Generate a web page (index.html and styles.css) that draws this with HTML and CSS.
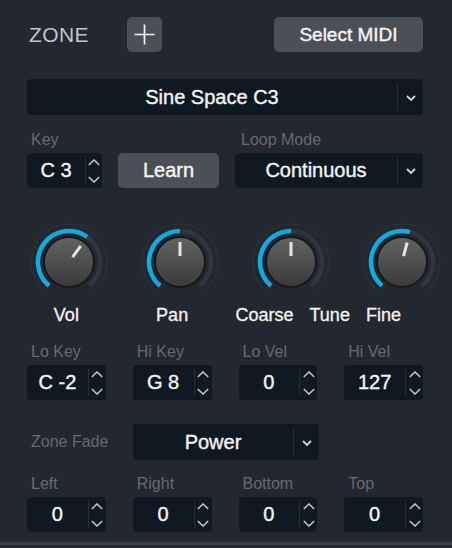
FILE: index.html
```html
<!DOCTYPE html>
<html lang="en">
<head>
    <meta charset="UTF-8">
    <title>Zone</title>
    <link rel="stylesheet" href="styles.css">
</head>
<body>
    <div class="panel">
        <div class="header">
            <span class="zone-title">ZONE</span>
            <button class="btn plus-btn">
                <svg width="21" height="21" viewBox="0 0 21 21"><path d="M10.5 0.5V20.5M0.5 10.5H20.5" stroke="#f2f2f2" stroke-width="1.7"/></svg>
            </button>
            <button class="btn midi-btn">Select MIDI</button>
        </div>

        <div class="dropdown sample">
            <span class="value">Sine Space C3</span>
            <span class="divider"></span>
            <span class="chevron"><svg width="10" height="6" viewBox="0 0 10 6"><polyline points="1,1 5,5 9,1" fill="none" stroke="#d4d4d4" stroke-width="1.8"/></svg></span>
        </div>

        <div class="row-key">
            <div class="group key-group">
                <div class="label">Key</div>
                <div class="stepper">
                    <span class="value">C 3</span>
                    <span class="divider"></span>
                    <span class="arrows"><svg width="12" height="24" viewBox="0 0 12 24"><polyline points="0.8,6 6,1 11.2,6" fill="none" stroke="#c4c4c4" stroke-width="1.6"/><polyline points="0.8,18 6,23 11.2,18" fill="none" stroke="#c4c4c4" stroke-width="1.6"/></svg></span>
                </div>
            </div>
            <button class="btn learn-btn">Learn</button>
            <div class="group loop-group">
                <div class="label">Loop Mode</div>
                <div class="dropdown">
                    <span class="value">Continuous</span>
                    <span class="divider"></span>
                    <span class="chevron"><svg width="10" height="6" viewBox="0 0 10 6"><polyline points="1,1 5,5 9,1" fill="none" stroke="#d4d4d4" stroke-width="1.8"/></svg></span>
                </div>
            </div>
        </div>

        <!-- knobs -->
        <div class="grid4 knobs">
            <div class="knob">
                <svg width="84" height="84" viewBox="0 0 84 84">
                    <path d="M17.57 71.11A38 38 0 1 1 66.43 71.11" fill="none" stroke="#2b3038" stroke-width="1.5"/>
                    <path d="M22.07 65.75A31 31 0 1 1 61.93 65.75" fill="none" stroke="#30363f" stroke-width="4.5"/>
                    <path d="M22.07 65.75A31 31 0 0 1 60.22 16.92" fill="none" stroke="#14a9df" stroke-width="4.5"/>
                    <circle cx="42" cy="42" r="26" fill="#15181d"/>
                    <circle cx="42" cy="42" r="24" fill="url(#knobFill)"/>
                    <line x1="45.53" y1="37.15" x2="53.76" y2="25.82" stroke="#e4e4e4" stroke-width="3"/>
                    <defs>
                        <linearGradient id="knobFill" x1="0" y1="0" x2="0" y2="1">
                            <stop offset="0" stop-color="#626262"/>
                            <stop offset="1" stop-color="#3b3b3c"/>
                        </linearGradient>
                    </defs>
                </svg>
            </div>
            <div class="knob">
                <svg width="84" height="84" viewBox="0 0 84 84">
                    <path d="M17.57 71.11A38 38 0 1 1 66.43 71.11" fill="none" stroke="#2b3038" stroke-width="1.5"/>
                    <path d="M22.07 65.75A31 31 0 1 1 61.93 65.75" fill="none" stroke="#30363f" stroke-width="4.5"/>
                    <path d="M22.07 65.75A31 31 0 0 1 42 11" fill="none" stroke="#14a9df" stroke-width="4.5"/>
                    <circle cx="42" cy="42" r="26" fill="#15181d"/>
                    <circle cx="42" cy="42" r="24" fill="url(#knobFill)"/>
                    <line x1="42" y1="36" x2="42" y2="22" stroke="#e4e4e4" stroke-width="3"/>
                </svg>
            </div>
            <div class="knob">
                <svg width="84" height="84" viewBox="0 0 84 84">
                    <path d="M17.57 71.11A38 38 0 1 1 66.43 71.11" fill="none" stroke="#2b3038" stroke-width="1.5"/>
                    <path d="M22.07 65.75A31 31 0 1 1 61.93 65.75" fill="none" stroke="#30363f" stroke-width="4.5"/>
                    <path d="M22.07 65.75A31 31 0 0 1 42 11" fill="none" stroke="#14a9df" stroke-width="4.5"/>
                    <circle cx="42" cy="42" r="26" fill="#15181d"/>
                    <circle cx="42" cy="42" r="24" fill="url(#knobFill)"/>
                    <line x1="42" y1="36" x2="42" y2="22" stroke="#e4e4e4" stroke-width="3"/>
                </svg>
            </div>
            <div class="knob">
                <svg width="84" height="84" viewBox="0 0 84 84">
                    <path d="M17.57 71.11A38 38 0 1 1 66.43 71.11" fill="none" stroke="#2b3038" stroke-width="1.5"/>
                    <path d="M22.07 65.75A31 31 0 1 1 61.93 65.75" fill="none" stroke="#30363f" stroke-width="4.5"/>
                    <path d="M22.07 65.75A31 31 0 0 1 50.02 12.06" fill="none" stroke="#14a9df" stroke-width="4.5"/>
                    <circle cx="42" cy="42" r="26" fill="#15181d"/>
                    <circle cx="42" cy="42" r="24" fill="url(#knobFill)"/>
                    <line x1="43.55" y1="36.2" x2="47.18" y2="22.68" stroke="#e4e4e4" stroke-width="3"/>
                </svg>
            </div>
        </div>
        <div class="grid4 knob-labels">
            <span class="knob-label">Vol</span>
            <span class="knob-label">Pan</span>
            <span class="tune-labels">
                <span>Coarse</span>
                <span>Tune</span>
                <span>Fine</span>
            </span>
        </div>

        <div class="grid4 range-row">
            <div class="group">
                <div class="label">Lo Key</div>
                <div class="stepper">
                    <span class="value">C -2</span>
                    <span class="divider"></span>
                    <span class="arrows"><svg width="12" height="24" viewBox="0 0 12 24"><polyline points="0.8,6 6,1 11.2,6" fill="none" stroke="#c4c4c4" stroke-width="1.6"/><polyline points="0.8,18 6,23 11.2,18" fill="none" stroke="#c4c4c4" stroke-width="1.6"/></svg></span>
                </div>
            </div>
            <div class="group">
                <div class="label">Hi Key</div>
                <div class="stepper">
                    <span class="value">G 8</span>
                    <span class="divider"></span>
                    <span class="arrows"><svg width="12" height="24" viewBox="0 0 12 24"><polyline points="0.8,6 6,1 11.2,6" fill="none" stroke="#c4c4c4" stroke-width="1.6"/><polyline points="0.8,18 6,23 11.2,18" fill="none" stroke="#c4c4c4" stroke-width="1.6"/></svg></span>
                </div>
            </div>
            <div class="group">
                <div class="label">Lo Vel</div>
                <div class="stepper">
                    <span class="value">0</span>
                    <span class="divider"></span>
                    <span class="arrows"><svg width="12" height="24" viewBox="0 0 12 24"><polyline points="0.8,6 6,1 11.2,6" fill="none" stroke="#c4c4c4" stroke-width="1.6"/><polyline points="0.8,18 6,23 11.2,18" fill="none" stroke="#c4c4c4" stroke-width="1.6"/></svg></span>
                </div>
            </div>
            <div class="group">
                <div class="label">Hi Vel</div>
                <div class="stepper">
                    <span class="value">127</span>
                    <span class="divider"></span>
                    <span class="arrows"><svg width="12" height="24" viewBox="0 0 12 24"><polyline points="0.8,6 6,1 11.2,6" fill="none" stroke="#c4c4c4" stroke-width="1.6"/><polyline points="0.8,18 6,23 11.2,18" fill="none" stroke="#c4c4c4" stroke-width="1.6"/></svg></span>
                </div>
            </div>
        </div>

        <div class="fade-row">
            <span class="label fade-label">Zone Fade</span>
            <div class="dropdown fade-dropdown">
                <span class="value">Power</span>
                <span class="divider"></span>
                <span class="chevron"><svg width="10" height="6" viewBox="0 0 10 6"><polyline points="1,1 5,5 9,1" fill="none" stroke="#d4d4d4" stroke-width="1.8"/></svg></span>
            </div>
        </div>

        <div class="grid4 fade-values">
            <div class="group">
                <div class="label">Left</div>
                <div class="stepper">
                    <span class="value">0</span>
                    <span class="divider"></span>
                    <span class="arrows"><svg width="12" height="24" viewBox="0 0 12 24"><polyline points="0.8,6 6,1 11.2,6" fill="none" stroke="#c4c4c4" stroke-width="1.6"/><polyline points="0.8,18 6,23 11.2,18" fill="none" stroke="#c4c4c4" stroke-width="1.6"/></svg></span>
                </div>
            </div>
            <div class="group">
                <div class="label">Right</div>
                <div class="stepper">
                    <span class="value">0</span>
                    <span class="divider"></span>
                    <span class="arrows"><svg width="12" height="24" viewBox="0 0 12 24"><polyline points="0.8,6 6,1 11.2,6" fill="none" stroke="#c4c4c4" stroke-width="1.6"/><polyline points="0.8,18 6,23 11.2,18" fill="none" stroke="#c4c4c4" stroke-width="1.6"/></svg></span>
                </div>
            </div>
            <div class="group">
                <div class="label">Bottom</div>
                <div class="stepper">
                    <span class="value">0</span>
                    <span class="divider"></span>
                    <span class="arrows"><svg width="12" height="24" viewBox="0 0 12 24"><polyline points="0.8,6 6,1 11.2,6" fill="none" stroke="#c4c4c4" stroke-width="1.6"/><polyline points="0.8,18 6,23 11.2,18" fill="none" stroke="#c4c4c4" stroke-width="1.6"/></svg></span>
                </div>
            </div>
            <div class="group">
                <div class="label">Top</div>
                <div class="stepper">
                    <span class="value">0</span>
                    <span class="divider"></span>
                    <span class="arrows"><svg width="12" height="24" viewBox="0 0 12 24"><polyline points="0.8,6 6,1 11.2,6" fill="none" stroke="#c4c4c4" stroke-width="1.6"/><polyline points="0.8,18 6,23 11.2,18" fill="none" stroke="#c4c4c4" stroke-width="1.6"/></svg></span>
                </div>
            </div>
        </div>
    </div>
</body>
</html>
```
FILE: styles.css
```css
body {
    margin: 0;
    background-color: #23272f;
    font-family: "Liberation Sans", Arial, sans-serif;
    color: #f2f2f2;
}

.panel {
    height: 545px;
    box-sizing: border-box;
    padding: 17px 29px 0 27px;
    border-bottom: 3px solid #3a4049;
}

.header {
    display: flex;
    align-items: center;
    height: 35px;
}

.zone-title {
    font-size: 21px;
    letter-spacing: 0.4px;
    color: #c4c4c4;
    margin-left: 2px;
    width: 98px;
}

.btn {
    border: none;
    border-radius: 5px;
    background-color: #4b4f56;
    color: #f4f4f4;
    font-family: inherit;
    padding: 0;
    height: 35px;
    display: flex;
    align-items: center;
    justify-content: center;
    -webkit-text-stroke: 0.4px #f4f4f4;
}

.plus-btn {
    width: 35px;
}

.midi-btn {
    width: 149px;
    margin-left: auto;
    font-size: 19px;
}

.dropdown {
    display: flex;
    align-items: stretch;
    height: 35px;
    background-color: #0f1921;
    border-radius: 4px;
}

.value {
    -webkit-text-stroke: 0.4px #f2f2f2;
}

.dropdown .value {
    flex: 1;
    display: flex;
    align-items: center;
    justify-content: center;
    font-size: 20px;
}

.divider {
    width: 1px;
    margin: 4px 0;
    background-color: #28313b;
}

.chevron {
    width: 25px;
    display: flex;
    align-items: center;
    justify-content: center;
    padding-top: 1px;
}

.sample {
    height: 36px;
    margin-top: 27px;
}

.label {
    font-size: 16px;
    line-height: 18px;
    color: #656a72;
    padding-left: 4px;
    margin-bottom: 4px;
}

.row-key {
    display: flex;
    align-items: flex-end;
    margin-top: 16px;
}

.key-group {
    width: 75px;
}

.learn-btn {
    width: 101px;
    margin-left: 16px;
    font-size: 20px;
}

.loop-group {
    flex: 1;
    margin-left: 16px;
}

.loop-group .label {
    padding-left: 6px;
}

.stepper {
    display: flex;
    align-items: stretch;
    height: 35px;
    background-color: #0f1921;
    border-radius: 4px;
}

.stepper .value {
    flex: 1;
    display: flex;
    align-items: center;
    justify-content: center;
    font-size: 20px;
}

.arrows {
    width: 17px;
    display: flex;
    align-items: center;
    justify-content: center;
}

.key-group .arrows {
    width: 16px;
}

.grid4 {
    display: grid;
    grid-template-columns: repeat(4, 1fr);
    column-gap: 27px;
}

.knobs {
    margin-top: 32px;
}

.knob {
    display: flex;
    justify-content: center;
    height: 84px;
}

.knob-labels {
    font-size: 18px;
    line-height: 22px;
    -webkit-text-stroke: 0.3px #f2f2f2;
}

.knob-label {
    text-align: center;
}

.tune-labels {
    grid-column: 3 / 5;
    display: flex;
    gap: 16px;
    margin-left: -3px;
}

.range-row {
    margin-top: 17px;
}

.fade-row {
    display: flex;
    align-items: center;
    margin-top: 24px;
}

.fade-label {
    width: 102px;
    margin-bottom: 0;
}

.fade-dropdown {
    width: 186px;
    height: 36px;
}

.fade-values {
    margin-top: 15px;
}
```
